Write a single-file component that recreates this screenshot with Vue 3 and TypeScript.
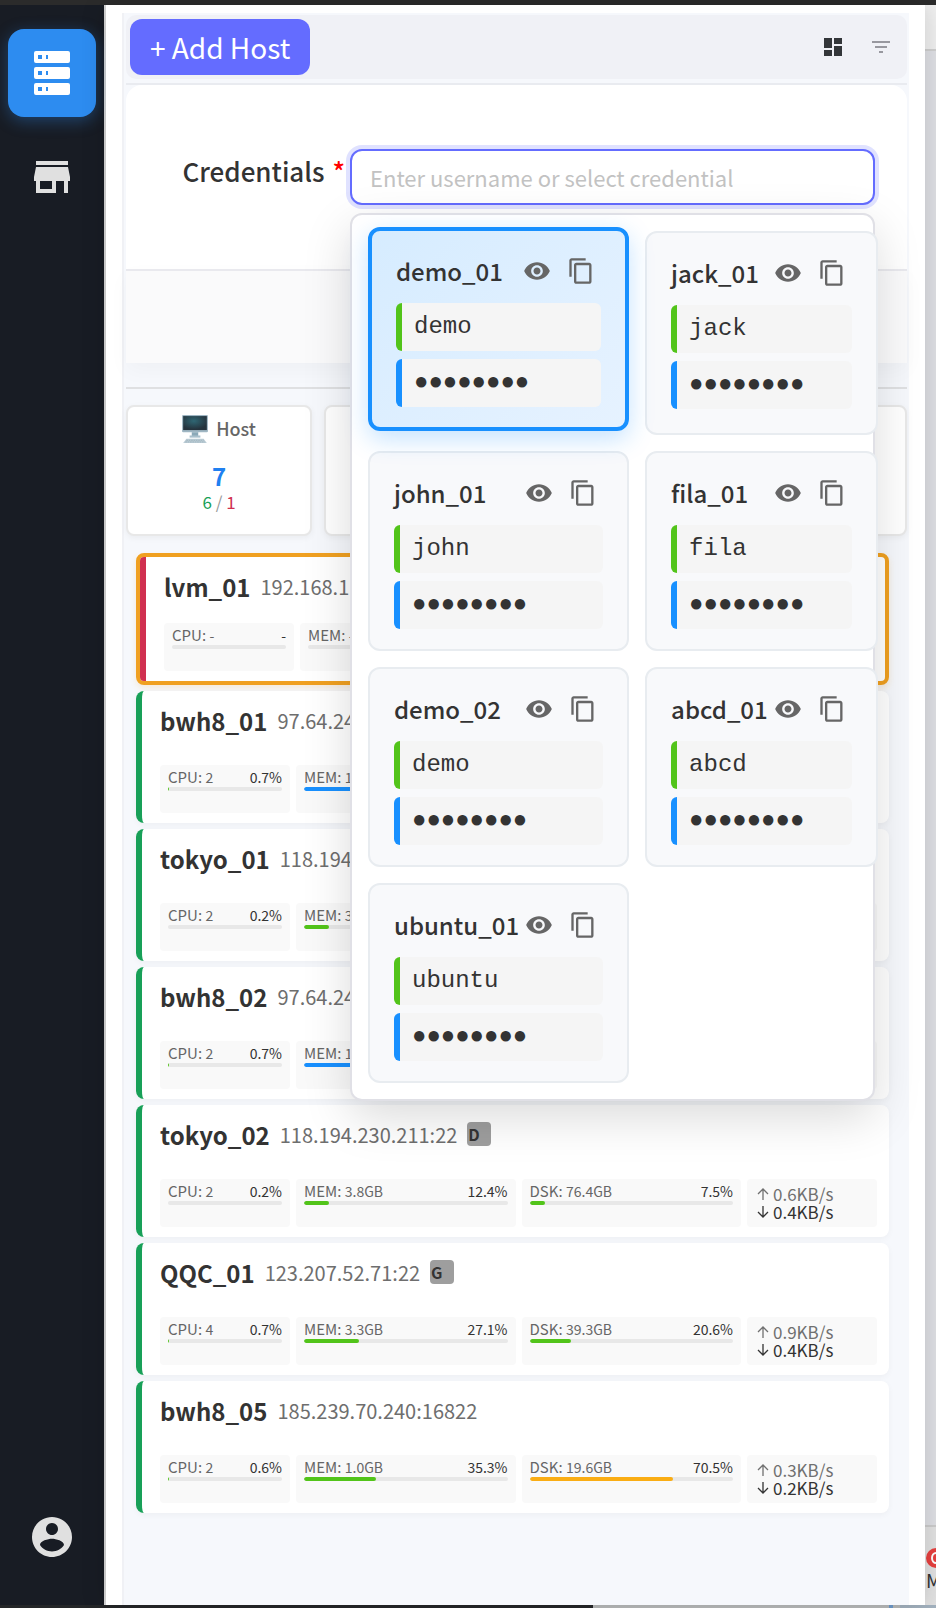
<script setup lang="ts">
import { ref } from 'vue'

interface Meter {
  label: string
  value: string
  percent: string
  fill: number
  tone: 'ok' | 'info' | 'warn'
}

interface Host {
  name: string
  address: string
  tag?: string
  offline?: boolean
  meters: Meter[]
  up?: string
  down?: string
}

interface Credential {
  name: string
  user: string
}

const cpu = (cores: string, percent: string, fill: number): Meter => ({
  label: 'CPU:', value: cores, percent, fill, tone: 'ok',
})
const mem = (size: string, percent: string, fill: number, tone: Meter['tone'] = 'ok'): Meter => ({
  label: 'MEM:', value: size, percent, fill, tone,
})
const disk = (size: string, percent: string, fill: number, tone: Meter['tone'] = 'ok'): Meter => ({
  label: size ? 'DSK:' : '', value: size, percent, fill, tone,
})

const hosts: Host[] = [
  { name: 'lvm_01', address: '192.168.1', offline: true, meters: [cpu('-', '-', 0), mem('-', '', 0), disk('', '', 0)] },
  { name: 'bwh8_01', address: '97.64.24', meters: [cpu('2', '0.7%', 0.7), mem('1', '', 60, 'info'), disk('', '', 0)] },
  { name: 'tokyo_01', address: '118.194', meters: [cpu('2', '0.2%', 0), mem('3', '', 12.4), disk('', '', 0)] },
  { name: 'bwh8_02', address: '97.64.24', meters: [cpu('2', '0.7%', 0.7), mem('1', '', 60, 'info'), disk('', '', 0)] },
  {
    name: 'tokyo_02', address: '118.194.230.211:22', tag: 'D',
    meters: [cpu('2', '0.2%', 0), mem('3.8GB', '12.4%', 12.4), disk('76.4GB', '7.5%', 7.5)],
    up: '0.6KB/s', down: '0.4KB/s',
  },
  {
    name: 'QQC_01', address: '123.207.52.71:22', tag: 'G',
    meters: [cpu('4', '0.7%', 0.7), mem('3.3GB', '27.1%', 27.1), disk('39.3GB', '20.6%', 20.6)],
    up: '0.9KB/s', down: '0.4KB/s',
  },
  {
    name: 'bwh8_05', address: '185.239.70.240:16822',
    meters: [cpu('2', '0.6%', 0.6), mem('1.0GB', '35.3%', 35.3), disk('19.6GB', '70.5%', 70.5, 'warn')],
    up: '0.3KB/s', down: '0.2KB/s',
  },
]

const credentials: Credential[] = [
  { name: 'demo_01', user: 'demo' },
  { name: 'jack_01', user: 'jack' },
  { name: 'john_01', user: 'john' },
  { name: 'fila_01', user: 'fila' },
  { name: 'demo_02', user: 'demo' },
  { name: 'abcd_01', user: 'abcd' },
  { name: 'ubuntu_01', user: 'ubuntu' },
]

const selected = ref('demo_01')
const username = ref('')
</script>

<template>
  <div class="shell">
    <div class="edge-top"></div>
    <div class="window">
      <nav class="sidebar">
        <button class="nav-button active" type="button" aria-label="Hosts">
          <svg viewBox="0 0 24 24" width="48" height="48">
            <path fill="#fff" fill-rule="evenodd" d="M4 1h16a1 1 0 0 1 1 1v4a1 1 0 0 1-1 1H4a1 1 0 0 1-1-1V2a1 1 0 0 1 1-1zM5 3v2h2V3zM9 3v2h1V3zM4 9h16a1 1 0 0 1 1 1v4a1 1 0 0 1-1 1H4a1 1 0 0 1-1-1v-4a1 1 0 0 1 1-1zM5 11v2h2v-2zM9 11v2h1v-2zM4 17h16a1 1 0 0 1 1 1v4a1 1 0 0 1-1 1H4a1 1 0 0 1-1-1v-4a1 1 0 0 1 1-1zM5 19v2h2v-2zM9 19v2h1v-2z" />
          </svg>
        </button>
        <button class="nav-button" type="button" aria-label="Store">
          <svg viewBox="0 0 24 24" width="48" height="48">
            <path fill="#e0e0e0" d="M20 4H4v2h16V4zm1 10v-2l-1-5H4l-1 5v2h1v6h10v-6h4v6h2v-6h1zm-9 4H6v-4h6v4z" />
          </svg>
        </button>
        <button class="nav-button account" type="button" aria-label="Account">
          <svg viewBox="0 0 24 24" width="48" height="48">
            <path fill="#e0e0e0" d="M12 2C6.48 2 2 6.48 2 12s4.48 10 10 10 10-4.48 10-10S17.520 2 12 2zm0 3c1.660 0 3 1.340 3 3s-1.340 3-3 3-3-1.340-3-3 1.340-3 3-3zm0 14.200c-2.500 0-4.710-1.280-6-3.220.03-1.990 4-3.080 6-3.080 1.990 0 5.970 1.090 6 3.080-1.290 1.940-3.500 3.220-6 3.220z" />
          </svg>
        </button>
      </nav>

      <main class="drawer">
        <div class="panel">
          <header class="toolbar">
            <button class="add" type="button">+ Add Host</button>
            <div class="tools">
              <button class="tool" type="button" aria-label="Layout">
                <svg viewBox="0 0 24 24" width="24" height="24">
                  <path fill="#333639" d="M3 13h8V3H3v10zm0 8h8v-6H3v6zm10 0h8V11h-8v10zm0-18v6h8V3h-8z" />
                </svg>
              </button>
              <button class="tool" type="button" aria-label="Filter">
                <svg viewBox="0 0 24 24" width="24" height="24">
                  <path fill="#98989f" d="M10 18h4v-2h-4v2zM3 6v2h18V6H3zm3 7h12v-2H6v2z" />
                </svg>
              </button>
            </div>
          </header>

          <form class="form" @submit.prevent>
            <div class="form-body">
              <label class="label" for="credential">Credentials <span class="star">*</span></label>
              <div class="field">
                <input id="credential" v-model="username" class="input" type="text" autocomplete="off" placeholder="Enter username or select credential" />
                <div class="popup">
                  <article
                    v-for="item in credentials"
                    :key="item.name"
                    class="credential"
                    :class="{ selected: item.name === selected }"
                    @click="selected = item.name"
                  >
                    <div class="credential-head">
                      <span class="credential-name">{{ item.name }}</span>
                      <div class="credential-actions">
                        <button type="button" aria-label="Show password">
                          <svg viewBox="0 0 24 24" width="28" height="28">
                            <path fill="#666" d="M12 4.500C7 4.500 2.730 7.610 1 12c1.730 4.390 6 7.500 11 7.500s9.270-3.110 11-7.500c-1.730-4.390-6-7.500-11-7.500zM12 17c-2.760 0-5-2.240-5-5s2.240-5 5-5 5 2.240 5 5-2.240 5-5 5zm0-8c-1.660 0-3 1.340-3 3s1.340 3 3 3 3-1.340 3-3-1.340-3-3-3z" />
                          </svg>
                        </button>
                        <button type="button" aria-label="Copy">
                          <svg viewBox="0 0 24 24" width="28" height="28">
                            <path fill="#666" d="M16 1H4c-1.100 0-2 .9-2 2v14h2V3h12V1zm3 4H8c-1.100 0-2 .9-2 2v14c0 1.100.9 2 2 2h11c1.100 0 2-.9 2-2V7c0-1.100-.9-2-2-2zm0 16H8V7h11v14z" />
                          </svg>
                        </button>
                      </div>
                    </div>
                    <div class="secret user">{{ item.user }}</div>
                    <div class="secret pass">●●●●●●●●</div>
                  </article>
                </div>
              </div>
            </div>
            <div class="form-foot"></div>
          </form>

          <hr class="rule" />

          <section class="stats">
            <div class="stat">
              <div class="stat-title">
                <svg viewBox="0 0 24 26" width="26" height="28">
                  <defs>
                    <radialGradient id="screen" cx="0.45" cy="0.35" r="0.6">
                      <stop offset="0" stop-color="#2f6673" />
                      <stop offset="1" stop-color="#25333d" />
                    </radialGradient>
                  </defs>
                  <rect x="0" y="0" width="24" height="16" rx="1" fill="#9fb6c3" />
                  <rect x="1" y="1" width="22" height="13" fill="url(#screen)" />
                  <path d="M9 16h6v4H9z" fill="#8ba9b8" />
                  <path d="M7 19h10v2H7z" fill="#a9c0cc" />
                  <path d="M4 22h16l3 4H1z" fill="#bccdd6" />
                  <path d="M4 23.500h16M3 25h18" stroke="#93a9b5" stroke-width="0.600" stroke-dasharray="1.500 0.700" />
                </svg>
                <span>Host</span>
              </div>
              <div class="stat-total">7</div>
              <div class="stat-split"><span class="good">6</span> <span class="slash">/</span> <span class="bad">1</span></div>
            </div>
            <div class="stat"></div>
            <div class="stat"></div>
            <div class="stat"></div>
          </section>

          <section class="hosts">
            <article v-for="host in hosts" :key="host.name" class="host" :class="{ offline: host.offline }">
              <div class="host-inner">
                <div class="host-head">
                  <span class="host-name">{{ host.name }}</span>
                  <span class="host-address">{{ host.address }}</span>
                  <span v-if="host.tag" class="tag">{{ host.tag }}</span>
                </div>
                <div class="meters">
                  <div v-for="(meter, i) in host.meters" :key="i" class="meter">
                    <div class="meter-text">
                      <span class="meter-label">{{ meter.label }} <small>{{ meter.value }}</small></span>
                      <span class="meter-percent">{{ meter.percent }}</span>
                    </div>
                    <div class="track">
                      <div class="fill" :class="meter.tone" :style="{ width: meter.fill + '%' }"></div>
                    </div>
                  </div>
                  <div class="net">
                    <template v-if="host.up">
                      <div class="net-line up">
                        <svg viewBox="0 0 12 12" width="12" height="12"><path d="M6 12V1M1 6l5-5 5 5" fill="none" stroke="currentColor" stroke-width="1.300" /></svg>
                        <span>{{ host.up }}</span>
                      </div>
                      <div class="net-line">
                        <svg viewBox="0 0 12 12" width="12" height="12"><path d="M6 0v11M1 6l5 5 5-5" fill="none" stroke="currentColor" stroke-width="1.300" /></svg>
                        <span>{{ host.down }}</span>
                      </div>
                    </template>
                  </div>
                </div>
              </div>
            </article>
          </section>
        </div>
      </main>

      <aside class="backdrop">
        <div class="backdrop-head"></div>
        <div class="backdrop-body"></div>
        <div class="backdrop-foot">
          <svg viewBox="0 0 20 20" width="20" height="20">
            <circle cx="10" cy="10" r="10" fill="#e8403f" />
            <ellipse cx="10" cy="10" rx="4" ry="5" fill="none" stroke="#fff" stroke-width="2" />
          </svg>
          <span>M</span>
        </div>
      </aside>
    </div>
    <div class="edge-bottom"><i></i></div>
  </div>
</template>

<style>
body {
  margin: 0;
  background: #2b2b2b;
}
</style>

<style scoped>
* {
  box-sizing: border-box;
}

.shell {
  display: flex;
  flex-direction: column;
  min-height: 100vh;
  overflow: hidden;
  color: #333;
  font-family: "Noto Sans CJK SC", "Noto Sans", sans-serif;
  font-size: 16px;
}

button {
  margin: 0;
  padding: 0;
  border: 0;
  background: none;
  font-family: inherit;
  cursor: pointer;
}

svg {
  display: block;
  flex: none;
}

.edge-top {
  height: 5px;
  background: #2b2b2b;
}

.edge-bottom {
  display: flex;
  height: 3px;
  background: linear-gradient(90deg, #242628 0 593px, #b9bbbb 593px 900px, #a3b2bf 900px);
}

.edge-bottom i {
  width: 4px;
  margin-left: 95%;
  background: #6f9bcb;
}

.window {
  display: flex;
  flex: 1;
}

.sidebar {
  display: flex;
  flex: none;
  flex-direction: column;
  gap: 16px;
  width: 106px;
  padding: 24px 8px;
  border-right: 2px solid #d8d8d8;
  background: #181c24;
}

.nav-button {
  display: flex;
  align-items: center;
  justify-content: center;
  width: 88px;
  height: 88px;
  border-radius: 16px;
}

.nav-button.active {
  background: #2d8cf0;
  box-shadow: 0 4px 16px rgba(45, 140, 240, 0.35);
}

.account {
  margin-top: auto;
}

.drawer {
  position: relative;
  z-index: 1;
  flex: 1;
  min-width: 0;
  padding: 8px 16px 0;
  background: #fff;
  box-shadow: 0 0 24px rgba(0, 0, 0, 0.16);
  display: flex;
  flex-direction: column;
}

.panel {
  flex: 1;
  padding: 2px 2px 0;
  border-left: 2px solid #f0f1f5;
  background: #f6f8fc;
}

.toolbar {
  display: flex;
  align-items: center;
  justify-content: space-between;
  height: 64px;
  padding: 0 14px 0 4px;
  border-radius: 10px;
  background: #f0f1f6;
}

.add {
  height: 56px;
  padding: 0 20px;
  border-radius: 12px;
  background: #646cff;
  color: #fff;
  font-size: 28px;
  line-height: 56px;
  white-space: nowrap;
}

.tools {
  display: flex;
  gap: 24px;
}

.form {
  margin-top: 4px;
  border-top: 2px solid #e9ebf0;
}

.form-body {
  display: flex;
  padding: 64px 32px 64px 0;
  border-radius: 16px 16px 0 0;
  background: #fff;
}

.label {
  flex: none;
  width: 224px;
  padding-right: 5px;
  font-size: 26px;
  font-weight: 500;
  line-height: 44px;
  text-align: right;
  white-space: nowrap;
}

.star {
  margin-left: 2px;
  color: #f00;
}

.field {
  position: relative;
  flex: 1;
  min-width: 0;
}

.input {
  display: block;
  width: 100%;
  height: 56px;
  padding: 0 18px;
  border: 2px solid #646cff;
  border-radius: 12px;
  outline: 0;
  background: #fff;
  box-shadow: 0 0 0 4px rgba(100, 108, 255, 0.2);
  color: #333;
  font-family: inherit;
  font-size: 22px;
}

.input::placeholder {
  color: #c2c2c2;
}

.popup {
  position: absolute;
  z-index: 5;
  top: 64px;
  left: 0;
  display: grid;
  grid-template-columns: 1fr 1fr;
  gap: 16px;
  width: 100%;
  padding: 16px;
  border: 2px solid #e0e0e6;
  border-radius: 12px;
  background: #fff;
  box-shadow: 0 16px 48px rgba(0, 0, 0, 0.15);
}

.credential {
  padding: 20px 24px;
  border: 2px solid #e8ecf0;
  border-radius: 12px;
  background: #f8f9fb;
}

.credential.selected {
  border: 4px solid #1890ff;
  background: linear-gradient(135deg, #d6ecff, #e6f2ff);
  box-shadow: 0 8px 24px rgba(24, 144, 255, 0.25);
  transform: translateY(-4px);
}

.credential-head {
  display: flex;
  align-items: center;
  justify-content: space-between;
  height: 40px;
  margin-bottom: 12px;
}

.credential-name {
  font-size: 24px;
  font-weight: 500;
  line-height: 40px;
  white-space: nowrap;
}

.credential-actions {
  display: flex;
  gap: 4px;
}

.credential-actions button {
  padding: 6px;
}

.secret {
  height: 48px;
  padding-left: 12px;
  border-left: 6px solid #52c41a;
  border-radius: 6px;
  background: #f5f5f5;
  font-family: "Liberation Mono", monospace;
  font-size: 24px;
  line-height: 48px;
  white-space: nowrap;
}

.pass {
  margin-top: 8px;
  border-left-color: #1890ff;
}

.form-foot {
  height: 94px;
  border-top: 2px solid #e9e9ee;
  background: #fafafb;
  box-shadow: 0 8px 20px rgba(0, 0, 0, 0.03);
}

.rule {
  height: 2px;
  margin: 24px 0 16px;
  border: 0;
  background: #dfe0e2;
}

.stats {
  display: grid;
  grid-template-columns: repeat(4, 1fr);
  gap: 12px;
  min-height: 131px;
}

.stat {
  padding-top: 8px;
  border: 2px solid #e8e8e8;
  border-radius: 8px;
  background: #fff;
  box-shadow: 0 2px 6px rgba(0, 0, 0, 0.05);
  text-align: center;
}

.stat-title {
  display: flex;
  align-items: center;
  justify-content: center;
  gap: 8px;
  height: 28px;
  color: #666;
  font-size: 18px;
  font-weight: 500;
  line-height: 26px;
}

.stat-title span {
  align-self: flex-start;
}

.stat-total {
  margin-top: 16px;
  color: #2080f0;
  font-size: 24px;
  font-weight: 700;
  line-height: 34px;
}

.stat-split {
  font-size: 17px;
  line-height: 18px;
}

.good {
  color: #18a058;
}

.bad {
  color: #d03050;
}

.slash {
  color: #999;
}

.hosts {
  display: flex;
  flex-direction: column;
  gap: 6px;
  padding: 17px 18px 0 10px;
}

.host {
  display: flex;
  min-height: 132px;
  border-radius: 8px;
  background: #fff;
  box-shadow: 0 2px 6px rgba(0, 0, 0, 0.04);
}

.host.offline {
  border: 4px solid #f0a020;
  box-shadow: 0 3px 6px rgba(240, 160, 32, 0.16);
}

.host-inner {
  display: flex;
  flex: 1;
  flex-direction: column;
  justify-content: space-between;
  min-width: 0;
  padding: 10px 12px 10px 18px;
  border-left: 6px solid #18a058;
  border-radius: 8px;
}

.offline .host-inner {
  border-left-color: #d03050;
  border-radius: 4px;
}

.host-head {
  display: flex;
  align-items: center;
  height: 38px;
  white-space: nowrap;
}

.host-name {
  margin-right: 10px;
  font-size: 24px;
  font-weight: 700;
}

.host-address {
  color: #6e6e6e;
  font-size: 20px;
}

.tag {
  width: 24px;
  height: 24px;
  margin-left: 10px;
  padding-left: 1px;
  border-radius: 4px;
  background: #9e9e9e;
  font-size: 16px;
  font-weight: 700;
  line-height: 24px;
}

.meters {
  display: grid;
  grid-template-columns: 130px 1fr 1fr 130px;
  gap: 6px;
}

.meter,
.net {
  height: 48px;
  border-radius: 4px;
  background: #f9f9f9;
}

.meter {
  padding: 4px 8px;
}

.meter-text {
  display: flex;
  align-items: baseline;
  justify-content: space-between;
  height: 18px;
  font-size: 15px;
  line-height: 16px;
  white-space: nowrap;
}

.meter-label {
  color: #666;
}

.meter-label small,
.meter-percent {
  font-size: 14px;
}

.track {
  height: 4px;
  border-radius: 2px;
  background: #e8e8e8;
  overflow: hidden;
}

.fill {
  height: 4px;
  border-radius: 2px;
}

.ok {
  background: #52c41a;
}

.info {
  background: #1890ff;
}

.warn {
  background: #faad14;
}

.net {
  padding: 6px 0 0 10px;
  font-size: 17px;
}

.net-line {
  display: flex;
  align-items: center;
  gap: 4px;
  height: 18px;
  line-height: 18px;
}

.net-line.up {
  color: #707070;
}

.backdrop {
  display: flex;
  flex: none;
  flex-direction: column;
  width: 11px;
  overflow: hidden;
  background: #dfe0e5;
}

.backdrop-head {
  height: 46px;
  border-bottom: 2px solid #d0d0d0;
  background: #f0f0f0;
}

.backdrop-body {
  flex: 1;
}

.backdrop-foot {
  height: 80px;
  padding: 21px 0 0 1px;
  border-top: 2px solid #cccccc;
  background: #e2e2e2;
  font-size: 19px;
  line-height: 24px;
}
</style>
